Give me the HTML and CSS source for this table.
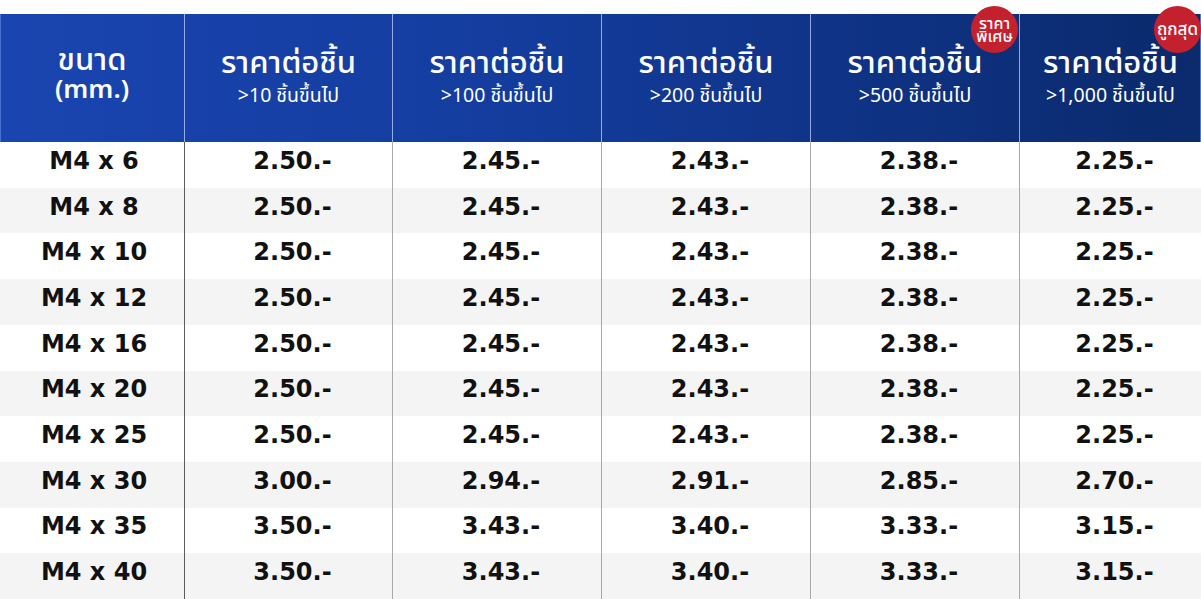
FILE: index.html
```html
<!DOCTYPE html>
<html lang="th">
<head>
<meta charset="utf-8">
<title>ราคา M4</title>
<link rel="stylesheet" href="styles.css">
</head>
<body>
<div class="table">
  <div class="row head">
    <div class="cell"><div class="size-title"><span class="th">ขนาด</span><br>(mm.)</div></div>
    <div class="cell"><div class="t">ราคาต่อชิ้น</div><div class="s">&gt;10 ชิ้นขึ้นไป</div></div>
    <div class="cell"><div class="t">ราคาต่อชิ้น</div><div class="s">&gt;100 ชิ้นขึ้นไป</div></div>
    <div class="cell"><div class="t">ราคาต่อชิ้น</div><div class="s">&gt;200 ชิ้นขึ้นไป</div></div>
    <div class="cell"><div class="t">ราคาต่อชิ้น</div><div class="s">&gt;500 ชิ้นขึ้นไป</div><div class="badge b1">ราคา<br>พิเศษ</div></div>
    <div class="cell"><div class="t">ราคาต่อชิ้น</div><div class="s">&gt;1,000 ชิ้นขึ้นไป</div><div class="badge b2">ถูกสุด</div></div>
  </div>
  <div class="row"><div class="cell">M4 x 6</div><div class="cell">2.50.-</div><div class="cell">2.45.-</div><div class="cell">2.43.-</div><div class="cell">2.38.-</div><div class="cell">2.25.-</div></div>
  <div class="row alt"><div class="cell">M4 x 8</div><div class="cell">2.50.-</div><div class="cell">2.45.-</div><div class="cell">2.43.-</div><div class="cell">2.38.-</div><div class="cell">2.25.-</div></div>
  <div class="row"><div class="cell">M4 x 10</div><div class="cell">2.50.-</div><div class="cell">2.45.-</div><div class="cell">2.43.-</div><div class="cell">2.38.-</div><div class="cell">2.25.-</div></div>
  <div class="row alt"><div class="cell">M4 x 12</div><div class="cell">2.50.-</div><div class="cell">2.45.-</div><div class="cell">2.43.-</div><div class="cell">2.38.-</div><div class="cell">2.25.-</div></div>
  <div class="row"><div class="cell">M4 x 16</div><div class="cell">2.50.-</div><div class="cell">2.45.-</div><div class="cell">2.43.-</div><div class="cell">2.38.-</div><div class="cell">2.25.-</div></div>
  <div class="row alt"><div class="cell">M4 x 20</div><div class="cell">2.50.-</div><div class="cell">2.45.-</div><div class="cell">2.43.-</div><div class="cell">2.38.-</div><div class="cell">2.25.-</div></div>
  <div class="row"><div class="cell">M4 x 25</div><div class="cell">2.50.-</div><div class="cell">2.45.-</div><div class="cell">2.43.-</div><div class="cell">2.38.-</div><div class="cell">2.25.-</div></div>
  <div class="row alt"><div class="cell">M4 x 30</div><div class="cell">3.00.-</div><div class="cell">2.94.-</div><div class="cell">2.91.-</div><div class="cell">2.85.-</div><div class="cell">2.70.-</div></div>
  <div class="row"><div class="cell">M4 x 35</div><div class="cell">3.50.-</div><div class="cell">3.43.-</div><div class="cell">3.40.-</div><div class="cell">3.33.-</div><div class="cell">3.15.-</div></div>
  <div class="row alt"><div class="cell">M4 x 40</div><div class="cell">3.50.-</div><div class="cell">3.43.-</div><div class="cell">3.40.-</div><div class="cell">3.33.-</div><div class="cell">3.15.-</div></div>
</div>
</body>
</html>
```

FILE: styles.css
```css
* { box-sizing: border-box; }
html, body { margin: 0; padding: 0; background: #ffffff; }
body {
  width: 1201px;
  height: 599px;
  overflow: hidden;
  font-family: "Noto Sans Thai", "Noto Sans", "DejaVu Sans", sans-serif;
  padding-top: 14px;
}
.table {
  display: grid;
  grid-template-rows: 128px repeat(10, 1fr);
  height: 585px;
}
.row {
  display: grid;
  grid-template-columns: 184px 208px 209px 209px 209px 182px;
  background: #ffffff;
}
.row.alt { background: #f4f4f4; }
.cell {
  display: flex;
  align-items: center;
  justify-content: center;
  font-family: "DejaVu Sans", "Noto Sans", sans-serif;
  font-size: 24px;
  font-weight: 700;
  color: #111111;
  padding-bottom: 8px;
  padding-left: 8px;
}
.row .cell:first-child { padding-left: 4px; }
.row .cell + .cell { border-left: 1px solid #a9a9a9; }
.row .cell:nth-child(2) { border-left-color: #5c5c5c; }

.row.head {
  background: linear-gradient(90deg, #1a45b0 0%, #143d9f 40%, #0f3386 70%, #0b2a6c 100%);
  box-shadow: inset 1px 0 0 #4a70d0, inset -1px 0 0 #5a78c0;
}
.row.head .cell {
  flex-direction: column;
  font-family: "Noto Sans Thai", "Noto Sans", "DejaVu Sans", sans-serif;
  color: #ffffff;
  padding: 4px 0 6px 0;
  position: relative;
  border-left-color: rgba(190, 210, 255, 0.75);
}
.row.head .cell:first-child { padding: 0 0 6px 0; }
.size-title {
  font-size: 26px;
  font-weight: 600;
  line-height: 28px;
  text-align: center;
}
.size-title .th { font-size: 31px; font-weight: 500; }
.t {
  font-size: 31px;
  font-weight: 500;
  line-height: 34px;
}
.s {
  font-size: 19.5px;
  font-weight: 400;
  line-height: 24px;
  margin-top: 3px;
}
.badge {
  position: absolute;
  top: -8px;
  width: 47px;
  height: 47px;
  border-radius: 50%;
  background: #c4212f;
  color: #ffffff;
  display: flex;
  align-items: center;
  justify-content: center;
  text-align: center;
  font-weight: 500;
}
.b1 {
  right: 1px;
  font-size: 16px;
  line-height: 13px;
  padding-top: 3px;
}
.b2 {
  right: 0;
  font-size: 17px;
  line-height: 17px;
  padding-top: 2px;
}
```
